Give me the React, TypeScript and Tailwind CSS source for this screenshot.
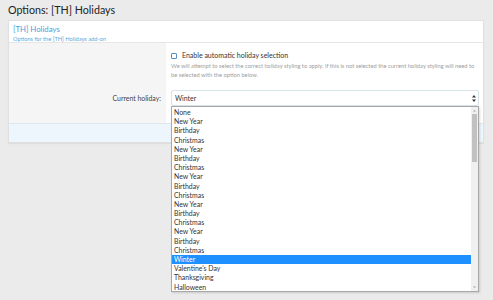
import React from "react";

const items = [
  "None",
  "New Year",
  "Birthday",
  "Christmas",
  "New Year",
  "Birthday",
  "Christmas",
  "New Year",
  "Birthday",
  "Christmas",
  "New Year",
  "Birthday",
  "Christmas",
  "New Year",
  "Birthday",
  "Christmas",
  "Winter",
  "Valentine's Day",
  "Thanksgiving",
  "Halloween",
];

export default function App() {
  return (
    <div
      className="min-h-[300px] bg-[#ebebeb] pl-2 pr-[9px]"
      style={{ fontFamily: 'Lato, "Noto Sans", sans-serif' }}
    >
      <h1 className="h-5 flex items-center text-[10.7px] leading-none text-[#222] pt-px">
        Options: [TH] Holidays
      </h1>
      <div className="bg-white border border-[#e0e0e0] shadow-[0_1px_1px_rgba(0,0,0,0.06)]">
        <div className="h-[22px] px-[4px] pt-[3px] border-b border-[#e6e6e6] flex flex-col">
          <div className="text-[7.8px] leading-[11px] text-[#47a0dd]">[TH] Holidays</div>
          <div className="text-[5.7px] leading-[7px] text-[#5aa7de]">
            Options for the [TH] Holidays add-on
          </div>
        </div>
        <div className="flex h-[80px]">
          <div className="w-[157px] bg-[#f5f5f5] flex flex-col justify-end pb-[17px] pr-[5px]">
            <div className="text-right text-[6.9px] leading-[16px] text-[#444]">
              Current holiday:
            </div>
          </div>
          <div className="flex-1 pl-[5px] pr-[4px] pt-[8px] flex flex-col">
            <label className="flex items-center h-[9px] gap-[5px]">
              <span className="w-[6px] h-[6px] border border-[#5d8fc0] bg-white rounded-[1px]" />
              <span className="text-[7px] leading-none text-[#333]">
                Enable automatic holiday selection
              </span>
            </label>
            <div className="mt-[2px] text-[5.75px] leading-[8.5px] text-[#a0a0a0]">
              We will attempt to select the correct holiday styling to apply. If this is not selected the current
              holiday styling will need to be selected with the option below.
            </div>
            <div className="relative mt-[11px]">
              <div className="h-[16px] border border-[#d6e3e8] rounded-[2px] bg-white flex items-center justify-between pl-[3px] pr-[2px]">
                <span className="text-[6.9px] leading-none text-[#333]">Winter</span>
                <svg width="4" height="7" viewBox="0 0 4 7">
                  <path d="M2 0 L4 2.6 L0 2.6 Z M2 7 L4 4.4 L0 4.4 Z" fill="#333" />
                </svg>
              </div>
              <div className="absolute left-0 right-0 top-full h-[186px] bg-white border border-[#a8a8a8] flex shadow-[1px_1px_2px_rgba(0,0,0,0.15)] z-10">
                <div className="flex-1 flex flex-col pt-px">
                  {items.map((it, i) => (
                    <div
                      key={i}
                      className={
                        it === "Winter"
                          ? "h-[9.2px] leading-[9.2px] text-[6.9px] pl-[2px] bg-[#1e90ff] text-white"
                          : "h-[9.2px] leading-[9.2px] text-[6.9px] pl-[2px] text-[#333]"
                      }
                    >
                      {it}
                    </div>
                  ))}
                </div>
                <div className="w-[7px] bg-[#f0f0f0] flex flex-col items-center">
                  <svg width="7" height="7" viewBox="0 0 7 7">
                    <path d="M2 4.5 L3.5 3 L5 4.5 Z" fill="#a0a0a0" />
                  </svg>
                  <div className="w-[5px] h-[48px] bg-[#c1c1c1]" />
                  <div className="flex-1" />
                  <svg width="7" height="7" viewBox="0 0 7 7">
                    <path d="M2 2.5 L3.5 4 L5 2.5 Z" fill="#a0a0a0" />
                  </svg>
                </div>
              </div>
            </div>
          </div>
        </div>
        <div className="h-[19px] bg-[#edf6fd] border-t border-[#dfe7ee]" />
      </div>
    </div>
  );
}
